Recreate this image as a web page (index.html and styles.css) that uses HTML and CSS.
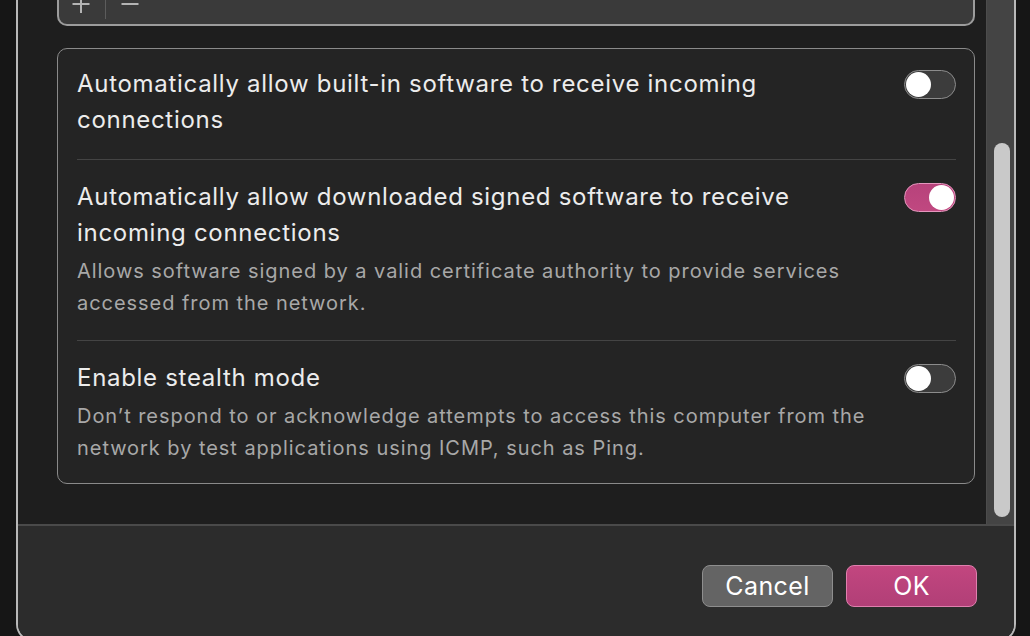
FILE: index.html
```html
<!DOCTYPE html>
<html>
<head>
<meta charset="utf-8">
<link rel="stylesheet" href="styles.css">
</head>
<body>
<div class="dialog">
  <div class="scroll-area">
    <div class="content">
      <div class="list-card">
        <div class="list-tools">
          <span class="tool">
            <svg width="18" height="14" viewBox="0 0 18 14"><path d="M9 0v13M0.5 4h17" stroke="#b4b4b4" stroke-width="2" fill="none"/></svg>
          </span>
          <span class="tool-sep"></span>
          <span class="tool">
            <svg width="18" height="14" viewBox="0 0 18 14"><path d="M0.5 4h17" stroke="#b4b4b4" stroke-width="2" fill="none"/></svg>
          </span>
        </div>
      </div>
      <div class="card">
        <div class="row">
          <div class="row-text">
            <div class="title">Automatically allow built-in software to receive incoming connections</div>
          </div>
          <div class="toggle"><span class="knob"></span></div>
        </div>
        <div class="row">
          <div class="row-text">
            <div class="title">Automatically allow downloaded signed software to receive incoming connections</div>
            <div class="desc">Allows software signed by a valid certificate authority to provide services accessed from the network.</div>
          </div>
          <div class="toggle on"><span class="knob"></span></div>
        </div>
        <div class="row">
          <div class="row-text">
            <div class="title">Enable stealth mode</div>
            <div class="desc">Don’t respond to or acknowledge attempts to access this computer from the network by test applications using ICMP, such as Ping.</div>
          </div>
          <div class="toggle"><span class="knob"></span></div>
        </div>
      </div>
    </div>
    <div class="scrollbar"><div class="thumb"></div></div>
  </div>
  <div class="footer">
    <button class="btn cancel">Cancel</button>
    <button class="btn ok">OK</button>
  </div>
</div>
</body>
</html>
```
FILE: styles.css
```css
html, body {
  margin: 0;
  padding: 0;
  height: 636px;
  overflow: hidden;
  background: #161616;
  font-family: Inter, "Noto Sans", sans-serif;
}
.dialog {
  margin-left: 16px;
  width: 1000px;
  height: 642px;
  box-sizing: border-box;
  border: 2px solid #b9b9b9;
  border-top: none;
  border-radius: 0 0 18px 18px;
  overflow: hidden;
  display: flex;
  flex-direction: column;
  background: #1e1e1e;
}
.scroll-area {
  display: flex;
  height: 524px;
  flex: none;
}
.content {
  flex: 1;
  padding: 0 11px 0 39px;
  display: flex;
  flex-direction: column;
}
.list-card {
  height: 26px;
  box-sizing: border-box;
  background: #3a3a3a;
  border: 2px solid #9c9c9c;
  border-top: none;
  border-radius: 0 0 10px 10px;
  margin-bottom: 22px;
}
.list-tools {
  display: flex;
  align-items: flex-start;
  padding-left: 13px;
  height: 100%;
}
.tool {
  display: block;
  width: 18px;
  height: 14px;
}
.tool svg { display: block; }
.tool-sep {
  width: 1px;
  height: 19px;
  background: #5c5c5c;
  margin: 0 15px;
}
.card {
  background: #242424;
  border: 1px solid #8a8a8a;
  border-radius: 10px;
  padding: 0 18px 0 19px;
}
.row {
  display: flex;
  align-items: flex-start;
  padding: 19px 0 21px;
}
.row:first-child {
  padding-top: 17px;
}
.row:last-child {
  padding-bottom: 19px;
}
.row + .row {
  border-top: 1px solid #444;
}
.row-text {
  flex: 1;
  padding-right: 20px;
}
.title {
  color: #ececec;
  font-size: 24px;
  line-height: 36px;
  letter-spacing: 0.7px;
}
.desc {
  color: #a8a8a8;
  font-size: 20px;
  line-height: 32px;
  margin-top: 4px;
  letter-spacing: 0.95px;
}
.toggle {
  flex: none;
  width: 52px;
  height: 29px;
  box-sizing: border-box;
  border-radius: 15px;
  background: #3c3c3c;
  border: 1.5px solid #8c8c8c;
  margin-top: 3.5px;
  display: flex;
  align-items: center;
  padding: 0 1px;
}
.toggle .knob {
  width: 25px;
  height: 25px;
  border-radius: 50%;
  background: #fff;
}
.toggle.on {
  background: linear-gradient(#b7427b, #c04880);
  border-color: #e496bd;
  justify-content: flex-end;
}
.scrollbar {
  width: 28px;
  background: #444;
  border-left: 1px solid #4c4c4c;
  box-sizing: border-box;
  padding: 143px 0 0 7px;
}
.thumb {
  width: 16px;
  height: 374px;
  border-radius: 8px;
  background: #c9c9c9;
}
.footer {
  flex: 1;
  background: #2c2c2c;
  border-top: 2px solid #4a4a4a;
  display: flex;
  justify-content: flex-end;
  align-items: flex-start;
  padding: 39px 37px 0 0;
  gap: 13px;
}
.btn {
  width: 131px;
  height: 42px;
  border-radius: 8px;
  font-family: Inter, "Noto Sans", sans-serif;
  font-size: 25px;
  letter-spacing: 0.4px;
  color: #fff;
  padding: 0;
  box-sizing: border-box;
}
.btn.cancel {
  background: #646464;
  border: 1.5px solid #8e8e8e;
}
.btn.ok {
  background: linear-gradient(#c2467f, #b13f77);
  border: 1.5px solid #e07fae;
}
```
